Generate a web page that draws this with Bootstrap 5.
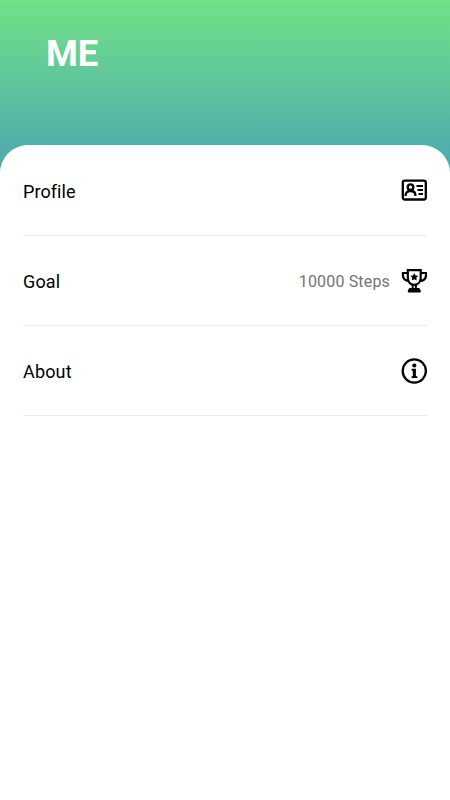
<!DOCTYPE html>
<html lang="en">
<head>
<meta charset="utf-8">
<meta name="viewport" content="width=device-width, initial-scale=1">
<title>Me</title>
<link href="https://cdn.jsdelivr.net/npm/bootstrap@5.3.0/dist/css/bootstrap.min.css" rel="stylesheet">
<style>
body { font-family: Roboto, "Liberation Sans", sans-serif; color: #000; background: linear-gradient(#72e187 0, #51b0a9 145px, #4bacb0 175px, #fff 175px); }
.page-head { height: 145px; padding: 32px 46px 0; }
.page-title { font-size: 36.5px; line-height: 44px; letter-spacing: -.3px; }
.sheet { border-radius: 28px 28px 0 0; padding: 0 23px; }
.setting { height: 90.2px; border-bottom: 1px solid #ececec; font-size: 18px; letter-spacing: .15px; padding-top: 1px; }
.setting:first-child { height: 91px; }
.setting:first-child span { padding-top: 1px; letter-spacing: .08px; }
.setting:first-child svg { margin-top: -2px; }
.value { font-size: 16px; letter-spacing: .17px; color: #747474; margin-right: 11px; padding-top: 1px; }
.setting svg { width: 26px; height: 26px; }
</style>
</head>
<body class="vh-100 overflow-hidden d-flex flex-column">
<header class="page-head flex-shrink-0">
  <h1 class="page-title fw-bold text-white m-0">ME</h1>
</header>
<main class="sheet bg-white flex-grow-1">
  <div class="setting d-flex align-items-center">
    <span class="me-auto">Profile</span>
    <svg viewBox="0 0 26 26" fill="none" stroke="#000" stroke-width="2.3">
      <rect x="1.8" y="3.7" width="23" height="18.8" rx="2"/>
      <circle cx="9.5" cy="10.2" r="2.8"/>
      <path d="M4.6 19v-.8c0-2.8 1.9-4.2 4.9-4.2s4.9 1.4 4.9 4.2v.8"/>
      <path d="M15.5 9H22M16.5 13H22M17.5 17H22" stroke-width="2"/>
    </svg>
  </div>
  <div class="setting d-flex align-items-center">
    <span class="me-auto">Goal</span>
    <span class="value">10000 Steps</span>
    <svg viewBox="0 0 26 26" fill="none" stroke="#000" stroke-width="2.2">
      <path d="M6.8 2.1h12.9v7.4c0 4.6-2.8 7.3-6.4 7.3s-6.5-2.7-6.5-7.3zM6.8 5H1.9v2.3c0 3.5 2.5 5.4 6.3 5.8M19.7 5H25v2.3c0 3.5-2.6 5.4-6.4 5.8"/>
      <path d="M11.7 17v3.8M14.9 17v3.8" stroke-width="1.9"/>
      <path d="M8.8 20.7h9l1.2 1.7v1.3H7.6v-1.3z" fill="#000" stroke-width="1.5" stroke-linejoin="round"/>
      <path d="M13.3 4.9l1.2 2.5 2.8.4-2 2 .5 2.8-2.5-1.4-2.5 1.4.5-2.8-2-2 2.8-.4z" fill="#000" stroke="none"/>
    </svg>
  </div>
  <div class="setting d-flex align-items-center">
    <span class="me-auto">About</span>
    <svg viewBox="0 0 26 26">
      <circle cx="13.3" cy="13" r="11.6" fill="none" stroke="#000" stroke-width="2.3"/>
      <circle cx="13.3" cy="7.5" r="2.1"/>
      <path d="M10.6 10.8h4.3v7.4h1.5v1.9h-5.8v-1.9h1.2v-5.5h-1.2z"/>
    </svg>
  </div>
</main>
<script src="https://cdn.jsdelivr.net/npm/bootstrap@5.3.0/dist/js/bootstrap.bundle.min.js"></script>
</body>
</html>
